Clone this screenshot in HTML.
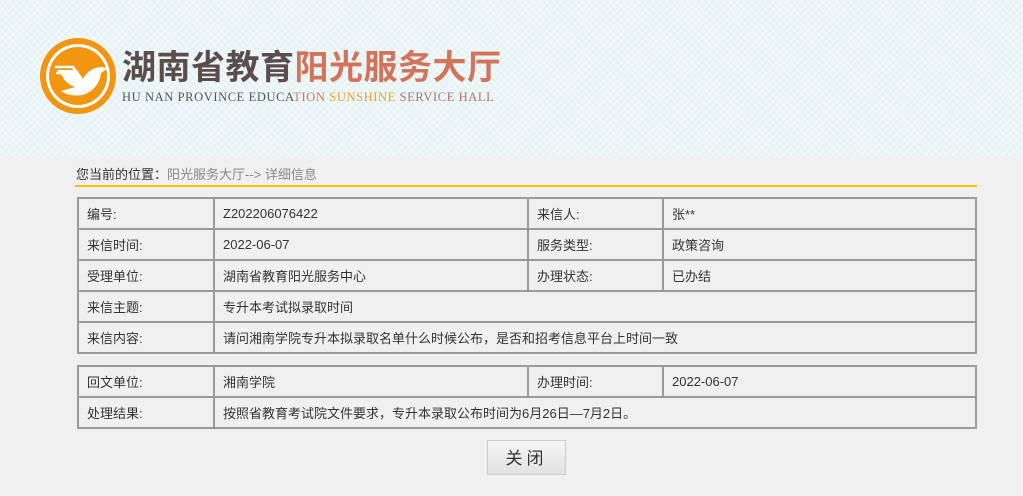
<!DOCTYPE html>
<html><head><meta charset="utf-8"><style>
body{margin:0;width:1023px;height:496px;background:#f0f0f0;font-family:"Liberation Sans","Noto Sans CJK SC",sans-serif;font-size:13px;color:#333;overflow:hidden;position:relative}
.hd{position:absolute;left:0;top:0;width:1023px;height:157px;background:#e4f2f3;background-image:repeating-linear-gradient(45deg,rgba(255,255,255,.35) 0 2px,transparent 2px 5px),repeating-linear-gradient(-45deg,rgba(255,255,255,.35) 0 2px,transparent 2px 5px)}
.t1{position:absolute;left:122px;top:45px;font-size:34px;font-weight:bold;color:#5b4d4d;white-space:nowrap;line-height:46px;letter-spacing:.5px}
.t1 span{color:#d2745b}
.t2{position:absolute;left:122px;top:90px;font-family:"Liberation Serif",serif;font-size:12.5px;color:#555;letter-spacing:.6px;white-space:nowrap}
.t2 span{color:#f0a030}
.bc{position:absolute;left:76px;top:164px;font-size:13px;color:#333}
.bc span{color:#888}
.line{position:absolute;left:75px;top:185px;width:902px;height:2px;background:#f5c400}
table{position:absolute;left:77px;border-collapse:collapse;width:900px}
td{border:2px solid #9a9a9a;height:31px;padding:0 0 0 8px;font-size:13px;color:#333;box-sizing:border-box}
.b{position:absolute;left:487px;top:440px;width:79px;height:35px;border:1px solid #ccc;background:linear-gradient(#f6f6f6,#e2e2e2);font-size:17px;text-align:center;line-height:35px;letter-spacing:4px;color:#333;box-sizing:border-box}
</style></head><body>
<div class="hd"></div>
<svg style="position:absolute;left:39px;top:37px" width="78" height="78" viewBox="0 0 78 78">
<circle cx="39" cy="39" r="38" fill="#f29511"/><circle cx="39" cy="39" r="32" fill="#fff"/><circle cx="39" cy="39" r="29" fill="#f29511"/>
<path d="M18 33 L38 33 L44 42 Q50 30 64 30 L68 32 L62 36 Q60 52 44 58 Q30 60 22 54 L36 50 Q26 46 24 40 Z" fill="#fff"/>
<path d="M16 30 L34 30 L38 36 M17 36 L32 36 L35 41" stroke="#fff" stroke-width="2.5" fill="none"/>
</svg>
<div class="t1">湖南省教育<span>阳光服务大厅</span></div>
<div class="t2">HU NAN PROVINCE EDUCA<span style="color:#d2745b">TION </span><span>SUNSHINE</span> <span style="color:#b07070">SERVICE HALL</span></div>
<div class="bc">您当前的位置：<span>阳光服务大厅--&gt; 详细信息</span></div>
<div class="line"></div>
<table style="top:197px">
<colgroup><col style="width:136px"><col style="width:314px"><col style="width:135px"><col></colgroup>
<tr><td>编号:</td><td>Z202206076422</td><td>来信人:</td><td>张**</td></tr>
<tr><td>来信时间:</td><td>2022-06-07</td><td>服务类型:</td><td>政策咨询</td></tr>
<tr><td>受理单位:</td><td>湖南省教育阳光服务中心</td><td>办理状态:</td><td>已办结</td></tr>
<tr><td>来信主题:</td><td colspan="3">专升本考试拟录取时间</td></tr>
<tr><td>来信内容:</td><td colspan="3">请问湘南学院专升本拟录取名单什么时候公布，是否和招考信息平台上时间一致</td></tr>
</table>
<table style="top:365px">
<colgroup><col style="width:136px"><col style="width:314px"><col style="width:135px"><col></colgroup>
<tr><td>回文单位:</td><td>湘南学院</td><td>办理时间:</td><td>2022-06-07</td></tr>
<tr><td>处理结果:</td><td colspan="3">按照省教育考试院文件要求，专升本录取公布时间为6月26日—7月2日。</td></tr>
</table>
<div class="b">关闭</div>
</body></html>
